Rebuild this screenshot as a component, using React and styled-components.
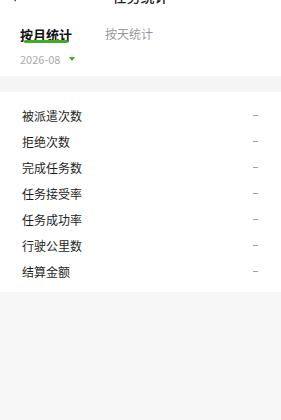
import React from 'react'
import styled, { createGlobalStyle } from 'styled-components'

const GlobalStyle = createGlobalStyle`
  html, body {
    margin: 0;
    padding: 0;
    background: #f7f7f7;
    font-family: "Noto Sans CJK SC", "Noto Sans", sans-serif;
  }
`

const Page = styled.div`
  width: 281px;
  height: 420px;
  overflow: hidden;
  background: #f7f7f7;
`

const Header = styled.div`
  position: relative;
  height: 14px;
  margin-top: -11px;
  background: #fff;
  display: flex;
  align-items: center;
  justify-content: center;
  font-size: 14px;
  font-weight: 500;
  color: #222;
  line-height: 14px;
`

const Back = styled.span`
  position: absolute;
  left: 12px;
  top: 4px;
  width: 6px;
  height: 6px;
  border-left: 1.5px solid #333;
  border-bottom: 1.5px solid #333;
  transform: rotate(45deg);
`

const TopPanel = styled.div`
  background: #fff;
  padding: 22px 20px 10px;
`

const Tabs = styled.div`
  display: flex;
  align-items: flex-start;
  gap: 33px;
`

const Tab = styled.div`
  position: relative;
  font-size: ${p => (p.$active ? '13px' : '12px')};
  font-weight: ${p => (p.$active ? 700 : 400)};
  color: ${p => (p.$active ? '#111' : '#999')};
  line-height: 18px;
  padding-bottom: 4px;
  margin-top: ${p => (p.$active ? '1px' : '0')};
`

const Underline = styled.span`
  position: absolute;
  left: 4px;
  right: 4px;
  top: 14px;
  height: 3px;
  border-radius: 2px;
  background: #3dae1c;
`

const DateRow = styled.div`
  display: flex;
  align-items: center;
  gap: 9px;
  margin-top: 4px;
  font-size: 11px;
  color: #aaa;
  line-height: 14px;
`

const Caret = styled.span`
  width: 0;
  height: 0;
  border-left: 3.5px solid transparent;
  border-right: 3.5px solid transparent;
  border-top: 4px solid #3dae1c;
`

const Gap = styled.div`
  height: 16px;
  background: #f5f5f5;
`

const Card = styled.div`
  background: #fff;
  padding: 10px 23px 8px 22px;
`

const Row = styled.div`
  display: flex;
  align-items: center;
  justify-content: space-between;
  height: 26px;
  font-size: 12px;
  color: #1e1e1e;
`

const Dash = styled.span`
  width: 5px;
  height: 1px;
  background: #a2a878;
`

const items = ['被派遣次数', '拒绝次数', '完成任务数', '任务接受率', '任务成功率', '行驶公里数', '结算金额']

export default function App() {
  return (
    <>
      <GlobalStyle />
      <Page>
        <Header>
          <Back />
          任务统计
        </Header>
        <TopPanel>
          <Tabs>
            <Tab $active>
              按月统计
              <Underline />
            </Tab>
            <Tab>按天统计</Tab>
          </Tabs>
          <DateRow>
            2026-08
            <Caret />
          </DateRow>
        </TopPanel>
        <Gap />
        <Card>
          {items.map(label => (
            <Row key={label}>
              <span>{label}</span>
              <Dash />
            </Row>
          ))}
        </Card>
      </Page>
    </>
  )
}
